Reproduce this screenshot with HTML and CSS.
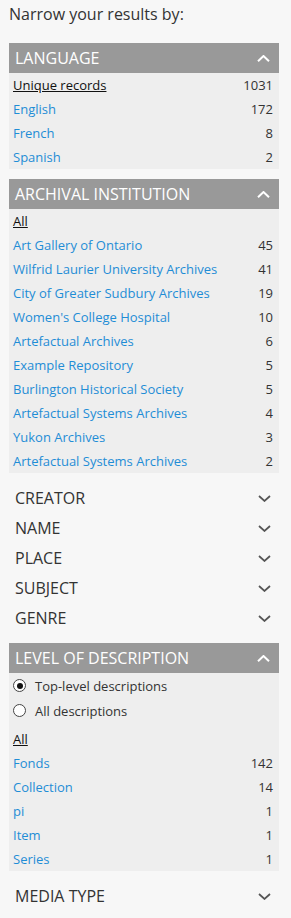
FILE: index.html
```html
<!DOCTYPE html>
<html lang="en">
<head>
    <meta charset="UTF-8">
    <meta name="viewport" content="width=device-width, initial-scale=1.0">
    <title>Narrow your results</title>
    <link rel="stylesheet" href="styles.css">
</head>
<body>

    <div class="sidebar">
        <h2 class="title">Narrow your results by:</h2>

        <!-- language -->
        <section class="facet open">
            <div class="facet-head">
                <span>Language</span>
                <svg class="chev" width="13" height="7" viewBox="0 0 13 7"><path d="M1 6.2 L6.5 1 L12 6.2" /></svg>
            </div>
            <ul class="facet-list">
                <li><a class="all" href="#">Unique records</a><span class="count">1031</span></li>
                <li><a href="#">English</a><span class="count">172</span></li>
                <li><a href="#">French</a><span class="count">8</span></li>
                <li><a href="#">Spanish</a><span class="count">2</span></li>
            </ul>
        </section>

        <!-- institution -->
        <section class="facet open">
            <div class="facet-head">
                <span>Archival institution</span>
                <svg class="chev" width="13" height="7" viewBox="0 0 13 7"><path d="M1 6.2 L6.5 1 L12 6.2" /></svg>
            </div>
            <ul class="facet-list">
                <li><a class="all" href="#">All</a></li>
                <li><a href="#">Art Gallery of Ontario</a><span class="count">45</span></li>
                <li><a href="#">Wilfrid Laurier University Archives</a><span class="count">41</span></li>
                <li><a href="#">City of Greater Sudbury Archives</a><span class="count">19</span></li>
                <li><a href="#">Women's College Hospital</a><span class="count">10</span></li>
                <li><a href="#">Artefactual Archives</a><span class="count">6</span></li>
                <li><a href="#">Example Repository</a><span class="count">5</span></li>
                <li><a href="#">Burlington Historical Society</a><span class="count">5</span></li>
                <li><a href="#">Artefactual Systems Archives</a><span class="count">4</span></li>
                <li><a href="#">Yukon Archives</a><span class="count">3</span></li>
                <li><a href="#">Artefactual Systems Archives</a><span class="count">2</span></li>
            </ul>
        </section>

        <!-- collapsed ones -->
        <div class="closed-group">
            <div class="facet-closed"><span>Creator</span><svg class="chev-down" width="13" height="7" viewBox="0 0 13 7"><path d="M1 1 L6.5 6 L12 1" /></svg></div>
            <div class="facet-closed"><span>Name</span><svg class="chev-down" width="13" height="7" viewBox="0 0 13 7"><path d="M1 1 L6.5 6 L12 1" /></svg></div>
            <div class="facet-closed"><span>Place</span><svg class="chev-down" width="13" height="7" viewBox="0 0 13 7"><path d="M1 1 L6.5 6 L12 1" /></svg></div>
            <div class="facet-closed"><span>Subject</span><svg class="chev-down" width="13" height="7" viewBox="0 0 13 7"><path d="M1 1 L6.5 6 L12 1" /></svg></div>
            <div class="facet-closed"><span>Genre</span><svg class="chev-down" width="13" height="7" viewBox="0 0 13 7"><path d="M1 1 L6.5 6 L12 1" /></svg></div>
        </div>

        <!-- level of description -->
        <section class="facet open">
            <div class="facet-head">
                <span>Level of description</span>
                <svg class="chev" width="13" height="7" viewBox="0 0 13 7"><path d="M1 6.2 L6.5 1 L12 6.2" /></svg>
            </div>
            <div class="radios">
                <label class="radio"><span class="dot checked"></span>Top-level descriptions</label>
                <label class="radio"><span class="dot"></span>All descriptions</label>
            </div>
            <ul class="facet-list">
                <li><a class="all" href="#">All</a></li>
                <li><a href="#">Fonds</a><span class="count">142</span></li>
                <li><a href="#">Collection</a><span class="count">14</span></li>
                <li><a href="#">pi</a><span class="count">1</span></li>
                <li><a href="#">Item</a><span class="count">1</span></li>
                <li><a href="#">Series</a><span class="count">1</span></li>
            </ul>
        </section>

        <div class="facet-closed"><span>Media type</span><svg class="chev-down" width="13" height="7" viewBox="0 0 13 7"><path d="M1 1 L6.5 6 L12 1" /></svg></div>
    </div>

</body>
</html>
```

FILE: styles.css
```css
* {
    margin: 0;
    padding: 0;
    box-sizing: border-box;
}

body {
    font-family: 'Open Sans', 'Liberation Sans', sans-serif;
    background: #f7f7f7;
    color: #333;
}

.sidebar {
    width: 270px;
    margin-left: 9px;
}

.title {
    font-size: 16px;
    font-weight: 400;
    line-height: 20px;
    padding-top: 4px;
    margin-bottom: 19px;
    color: #333;
}

.facet {
    margin-bottom: 10px;
}

.facet-head {
    display: flex;
    justify-content: space-between;
    align-items: center;
    height: 30px;
    padding: 0 9px 0 6px;
    background: #999;
    color: #fff;
    font-size: 16px;
    text-transform: uppercase;
}

.chev path {
    fill: none;
    stroke: #fff;
    stroke-width: 2;
}

.facet-list {
    list-style: none;
    background: #eee;
}

.facet-list li {
    display: flex;
    justify-content: space-between;
    height: 24px;
    line-height: 24px;
    padding: 0 6px 0 4px;
    font-size: 13px;
}

.facet-list a {
    color: #1f8dd6;
    text-decoration: none;
}

.facet-list a.all {
    color: #111;
    text-decoration: underline;
}

.count {
    color: #333;
}

.radios {
    background: #eee;
    padding-bottom: 4px;
}

.radio {
    display: flex;
    align-items: center;
    height: 25px;
    padding-left: 4px;
    font-size: 13px;
    color: #333;
}

.dot {
    width: 13px;
    height: 13px;
    border: 1px solid #444;
    border-radius: 50%;
    background: #fff;
    margin-right: 9px;
    position: relative;
}

.dot.checked::after {
    content: "";
    position: absolute;
    left: 2.5px;
    top: 2.5px;
    width: 6px;
    height: 6px;
    border-radius: 50%;
    background: #111;
}

.closed-group {
    margin-bottom: 10px;
}

.facet-closed {
    display: flex;
    justify-content: space-between;
    align-items: center;
    height: 30px;
    padding: 0 8px 0 6px;
    font-size: 16px;
    text-transform: uppercase;
    color: #333;
}

.chev-down path {
    fill: none;
    stroke: #555;
    stroke-width: 1.7;
}
```
